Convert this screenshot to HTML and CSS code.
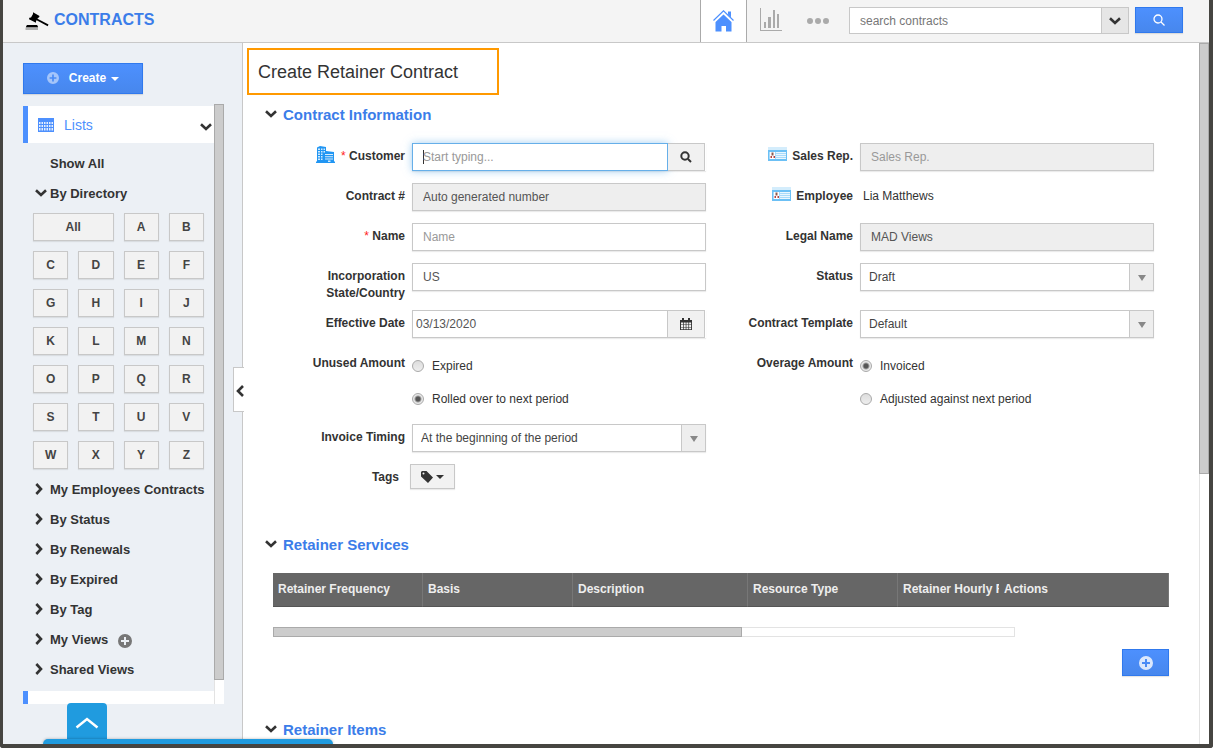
FILE: index.html
```html
<!DOCTYPE html>
<html lang="en">
<head>
<meta charset="utf-8">
<title>Contracts - Create Retainer Contract</title>
<link rel="stylesheet" href="styles.css">
</head>
<body>
<svg class="defs" aria-hidden="true">
  <symbol id="chev-down" viewBox="0 0 12 8"><path d="M1 1.300 6 6l5-4.700" fill="none" stroke="currentColor" stroke-width="2.600"/></symbol>
  <symbol id="chev-right" viewBox="0 0 8 12"><path d="M1.300 1 6 6l-4.700 5" fill="none" stroke="currentColor" stroke-width="2.600"/></symbol>
  <symbol id="plus-circle" viewBox="0 0 14 14"><path fill="currentColor" fill-rule="evenodd" d="M7 0a7 7 0 1 0 0 14A7 7 0 0 0 7 0zM6 3h2v3h3v2H8v3H6V8H3V6h3z"/></symbol>
  <symbol id="caret" viewBox="0 0 8 4"><path d="M0 0h8L4 4z" fill="currentColor"/></symbol>
  <symbol id="id-card" viewBox="0 0 19 14">
    <path fill="#d4edfc" d="M0 0h19v3H0z"/><path fill="#6cc0f5" d="M0 3h19v11H0z"/>
    <path fill="#a9dbfa" d="M1 5h17v7H1z"/><path fill="#fff" d="M2 5h5v7H2z"/>
    <path fill="#8a5a50" d="M3.500 5.500h2v3h-2z"/><path fill="#b5433f" d="M2.500 9h1.500v2H2.500zM5.500 9H7v2H5.500z"/>
    <path fill="#eaf7ff" d="M8 5h10v1H8zM8 7h10v1H8zM8 9h10v1H8zM8 11h10v1H8z"/>
  </symbol>
</svg>
<div class="window">
  <header class="topbar">
    <svg class="gavel" viewBox="0 0 24 19" aria-hidden="true">
      <path d="M8 .3 14.500 4l-.5 1.500-1 .3-2 3.500v1.500L4 7.300l.3-1.500L6 5.500l2-3.500z"/>
      <path d="m12 6.500 11.500 6-.8 1.700L11.200 8z"/><path d="M2 13h10l1 1.500v1H1v-1z"/><path fill="#b0b0b0" d="M.5 15.500h12.500V18H.5z"/>
    </svg>
    <span class="brand">CONTRACTS</span>
    <nav class="tabs">
      <a class="tab tab-active" href="#" aria-label="Home">
        <svg width="21" height="22" viewBox="0 0 21 22"><path fill="#4d90fe" d="M10.500 4.500 18.500 12v9.500h-5.500V16H8.500v5.500H2.500V12zM15 1.500h3v6l-3-3z"/><path d="m.5 10.500 10-9.700 10 9.700" fill="none" stroke="#4d90fe" stroke-width="1.200"/><path d="m2 11.300 8.500-8.200 8.500 8.200" fill="none" stroke="#fff" stroke-width="1"/></svg>
      </a>
      <a class="tab tab-chart" href="#" aria-label="Reports">
        <svg width="22" height="23" viewBox="0 0 22 23" fill="#aaa"><path d="M0 0h1v22h21v1H0zM4 14h2v6H4zM8 9h3v11H8zM13 2h2v18h-2zM17 6h2v14h-2z"/></svg>
      </a>
      <a class="tab" href="#" aria-label="More">
        <svg width="22" height="6" viewBox="0 0 22 6" fill="#aaa"><circle cx="3" cy="3" r="3"/><circle cx="11" cy="3" r="3"/><circle cx="19" cy="3" r="3"/></svg>
      </a>
    </nav>
    <form class="search">
      <div class="search-box">
        <input type="text" placeholder="search contracts" aria-label="Search contracts">
        <button type="button" aria-label="Search options"><svg width="12" height="8"><use href="#chev-down"/></svg></button>
      </div>
      <button class="primary search-go" type="button" aria-label="Search">
        <svg width="12" height="12" viewBox="0 0 12 12" fill="none" stroke="#fff" stroke-width="1.300"><circle cx="5" cy="5" r="4"/><path d="m8 8 3.500 3.500"/></svg>
      </button>
    </form>
  </header>

  <div class="body">
    <aside class="sidebar">
      <button class="primary create" type="button">
        <svg class="create-plus" width="12" height="12"><use href="#plus-circle"/></svg>
        Create
        <svg width="8" height="4"><use href="#caret"/></svg>
      </button>
      <div class="lists">
        <div class="lists-main">
          <a class="lists-head" href="#">
            <svg width="16" height="14" viewBox="0 0 16 14"><path fill="#4d90fe" d="M0 0h16v14H0z"/><path fill="#e6effd" d="M1 4h1.500v2H1zM3.500 4H5v2H3.500zM6 4h1.500v2H6zM8.500 4H10v2H8.500zM11 4h1.500v2H11zM13.500 4H15v2h-1.500zM1 7h1.500v2H1zM3.500 7H5v2H3.500zM6 7h1.500v2H6zM8.500 7H10v2H8.500zM11 7h1.500v2H11zM13.500 7H15v2h-1.500zM1 10h1.500v2.500H1zM3.500 10H5v2.500H3.500zM6 10h1.500v2.500H6zM8.500 10H10v2.500H8.500zM11 10h1.500v2.500H11zM13.500 10H15v2.500h-1.500z"/></svg>
            <span>Lists</span>
            <svg class="chev" width="12" height="8"><use href="#chev-down"/></svg>
          </a>
          <ul class="views">
            <li><a href="#"><span class="mark"></span>Show All</a></li>
            <li><a href="#"><span class="mark"><svg width="12" height="8"><use href="#chev-down"/></svg></span>By Directory</a>
              <div class="letters">
                <button class="all" type="button">All</button><button type="button">A</button><button type="button">B</button>
                <button type="button">C</button><button type="button">D</button><button type="button">E</button><button type="button">F</button>
                <button type="button">G</button><button type="button">H</button><button type="button">I</button><button type="button">J</button>
                <button type="button">K</button><button type="button">L</button><button type="button">M</button><button type="button">N</button>
                <button type="button">O</button><button type="button">P</button><button type="button">Q</button><button type="button">R</button>
                <button type="button">S</button><button type="button">T</button><button type="button">U</button><button type="button">V</button>
                <button type="button">W</button><button type="button">X</button><button type="button">Y</button><button type="button">Z</button>
              </div>
            </li>
            <li><a href="#"><span class="mark"><svg width="8" height="12"><use href="#chev-right"/></svg></span>My Employees Contracts</a></li>
            <li><a href="#"><span class="mark"><svg width="8" height="12"><use href="#chev-right"/></svg></span>By Status</a></li>
            <li><a href="#"><span class="mark"><svg width="8" height="12"><use href="#chev-right"/></svg></span>By Renewals</a></li>
            <li><a href="#"><span class="mark"><svg width="8" height="12"><use href="#chev-right"/></svg></span>By Expired</a></li>
            <li><a href="#"><span class="mark"><svg width="8" height="12"><use href="#chev-right"/></svg></span>By Tag</a></li>
            <li><a href="#"><span class="mark"><svg width="8" height="12"><use href="#chev-right"/></svg></span>My Views<svg class="add-view" width="14" height="14"><use href="#plus-circle"/></svg></a></li>
            <li><a href="#"><span class="mark"><svg width="8" height="12"><use href="#chev-right"/></svg></span>Shared Views</a></li>
          </ul>
          <div class="next-panel"></div>
        </div>
        <div class="track"><div class="thumb thumb-side"></div></div>
      </div>
      <button class="collapse" type="button" aria-label="Collapse sidebar"><svg width="8" height="12" viewBox="0 0 8 12"><path d="M7 1 2 6l5 5" fill="none" stroke="#333" stroke-width="2.600"/></svg></button>
    </aside>

    <main class="content">
      <h1 class="title">Create Retainer Contract</h1>

      <h2 class="section"><svg width="12" height="8"><use href="#chev-down"/></svg>Contract Information</h2>
      <form class="form">
        <div class="row">
          <label for="customer"><svg class="label-icon building" width="19" height="17" viewBox="0 0 19 17"><path fill="#2196f3" d="M1 1.500 4 0l6 1v4l8 1v9.500h1V17H0v-1.500h1z"/><path fill="#d5ecfd" d="M2 2.500h2V4H2zM5 2.500h1.500V4H5zM7.500 2.500H9V4H7.500zM2 5h2v1.500H2zM5 5h1.500v1.500H5zM7.500 5H9v1.500H7.500zM2 7.500h2V9H2zM5 7.500h1.500V9H5zM2 10h2v1.500H2zM5 10h1.500v1.500H5zM2 12.500h2V14H2zM5 12.500h1.500V14H5zM9 8h8v1H9zM9 10.300h8v1H9zM9 12.500h8v1H9zM12 14.500h2.500V16H12z"/></svg><span class="req">*</span> Customer</label>
          <div class="combo"><input class="active" id="customer" type="text" placeholder="Start typing..." autofocus><button type="button" aria-label="Find customer"><svg width="12" height="12" viewBox="0 0 12 12" fill="none" stroke="#333" stroke-width="2"><circle cx="5" cy="5" r="3.700"/><path d="m8 8 3 3"/></svg></button></div>
        </div>
        <div class="row">
          <label for="rep"><svg class="label-icon" width="19" height="14"><use href="#id-card"/></svg>Sales Rep.</label>
          <input id="rep" type="text" placeholder="Sales Rep." disabled>
        </div>
        <div class="row">
          <label for="number">Contract #</label>
          <input id="number" type="text" value="Auto generated number" disabled>
        </div>
        <div class="row">
          <span class="label"><svg class="label-icon" width="19" height="14"><use href="#id-card"/></svg>Employee</span>
          <span class="static">Lia Matthews</span>
        </div>
        <div class="row">
          <label for="name"><span class="req">*</span> Name</label>
          <input id="name" type="text" placeholder="Name">
        </div>
        <div class="row">
          <label for="legal">Legal Name</label>
          <input id="legal" type="text" value="MAD Views" disabled>
        </div>
        <div class="row">
          <label for="state">Incorporation State/Country</label>
          <input id="state" type="text" value="US">
        </div>
        <div class="row">
          <label for="status">Status</label>
          <div class="pick"><select id="status"><option>Draft</option></select><span class="arrow"></span></div>
        </div>
        <div class="row">
          <label for="date">Effective Date</label>
          <div class="combo"><input class="date" id="date" type="text" value="03/13/2020"><button type="button" aria-label="Open calendar"><svg width="12" height="12" viewBox="0 0 12 12"><path fill="#333" d="M0 2h12v10H0zM2 0h2v3H2zM8 0h2v3H8z"/><path fill="#f1f1f1" d="M1 4.500h2v2H1zM3.700 4.500h2v2h-2zM6.400 4.500h2v2h-2zM9.100 4.500h2v2h-2zM1 7h2v2H1zM3.700 7h2v2h-2zM6.400 7h2v2h-2zM9.100 7h2v2h-2zM1 9.500h2v1.700H1zM3.700 9.500h2v1.700h-2zM6.400 9.500h2v1.700h-2zM9.100 9.500h2v1.700h-2z"/></svg></button></div>
        </div>
        <div class="row">
          <label for="template">Contract Template</label>
          <div class="pick"><select id="template"><option>Default</option></select><span class="arrow"></span></div>
        </div>
        <div class="row" role="radiogroup" aria-labelledby="unused">
          <span class="label" id="unused">Unused Amount</span>
          <div class="options">
            <label><input type="radio" name="unused">Expired</label>
            <label><input type="radio" name="unused" checked>Rolled over to next period</label>
          </div>
        </div>
        <div class="row" role="radiogroup" aria-labelledby="overage">
          <span class="label" id="overage">Overage Amount</span>
          <div class="options">
            <label><input type="radio" name="overage" checked>Invoiced</label>
            <label><input type="radio" name="overage">Adjusted against next period</label>
          </div>
        </div>
        <div class="row row-start">
          <label for="timing">Invoice Timing</label>
          <div class="pick"><select id="timing"><option>At the beginning of the period</option></select><span class="arrow"></span></div>
        </div>
        <div class="row row-start row-tags">
          <label for="tags">Tags</label>
          <button class="tags" id="tags" type="button"><svg width="12" height="12" viewBox="0 0 12 12"><path fill="#333" fill-rule="evenodd" d="M0 1 1 0h4.500L12 6.500 7 12 0 5.500zM2.500 1.500a1 1 0 1 0 0 2 1 1 0 0 0 0-2z"/></svg><svg width="8" height="4"><use href="#caret"/></svg></button>
        </div>
      </form>

      <h2 class="section section-services"><svg width="12" height="8"><use href="#chev-down"/></svg>Retainer Services</h2>
      <div class="services">
        <table class="grid">
          <thead><tr><th class="c150">Retainer Frequency</th><th class="c150">Basis</th><th class="c175">Description</th><th class="c150">Resource Type</th><th class="hourly">Retainer Hourly Rate</th><th class="actions">Actions</th></tr></thead>
        </table>
        <div class="hscroll"><div class="hthumb"></div></div>
        <button class="primary add-row" type="button" aria-label="Add service"><svg width="14" height="14"><use href="#plus-circle"/></svg></button>
      </div>

      <h2 class="section section-items"><svg width="12" height="8"><use href="#chev-down"/></svg>Retainer Items</h2>
    </main>
    <div class="track"><div class="thumb thumb-page"></div></div>
  </div>
  <div class="dock">
    <button class="dock-tab" type="button" aria-label="Open dock"><svg width="24" height="12" viewBox="0 0 24 12"><path d="M1.500 10.500 12 2l10.500 8.500" fill="none" stroke="#fff" stroke-width="2.500"/></svg></button>
    <div class="dock-bar"></div>
  </div>
</div>
</body>
</html>
```
FILE: styles.css
```css
* { box-sizing: border-box; }
body {
  margin: 0;
  font: 12px/17px "Liberation Sans", Arial, sans-serif;
  color: #333;
  background: #fff;
}
button, input, select { font: inherit; color: inherit; margin: 0; }
button { padding: 0; cursor: pointer; }
a { color: inherit; text-decoration: none; }
svg { display: block; flex: none; }
.defs { display: none; }

.window {
  position: relative;
  display: flex;
  flex-direction: column;
  height: 100vh;
  overflow: hidden;
  border: solid #464541;
  border-width: 0 4px 4px 3px;
  border-radius: 0 0 3px 3px;
}

/* Top bar */
.topbar {
  display: flex;
  align-items: stretch;
  flex: none;
  height: 43px;
  padding: 0 26px 0 22px;
  background: #f4f4f4;
  border-bottom: 1px solid #c8c8c8;
}
.gavel { width: 24px; height: 19px; margin-top: 12px; }
.brand {
  margin-left: 5px;
  font-size: 16px;
  font-weight: bold;
  line-height: 40px;
  color: #3b7de9;
}
.tabs { display: flex; margin-left: auto; }
.tab {
  display: flex;
  align-items: center;
  justify-content: center;
  width: 47px;
}
.tab-active {
  background: #fff;
  border: solid #aaa;
  border-width: 0 1px;
}
.tab-chart { padding-bottom: 3px; }
.search { display: flex; align-items: flex-start; gap: 6px; margin-left: 8px; padding-top: 7px; }
.search-box {
  display: flex;
  width: 280px;
  height: 27px;
  border: 1px solid #c8c8c8;
  background: #fff;
}
.search-box input {
  flex: 1;
  min-width: 0;
  padding: 2px 10px 0;
  border: 0;
  background: none;
}
.search-box input::placeholder { color: #777; }
.search-box button {
  display: flex;
  align-items: center;
  justify-content: center;
  width: 27px;
  border: 0;
  border-left: 1px solid #c8c8c8;
  background: #e6e6e6;
}
.primary {
  display: flex;
  align-items: center;
  justify-content: center;
  border: 1px solid #3079ed;
  background: linear-gradient(#4d90fe, #4787ed);
  box-shadow: 0 1px 1px rgba(0, 0, 0, .1);
  color: #fff;
}
.search-go { width: 48px; height: 26px; }

/* Body */
.body { display: flex; flex: 1; min-height: 0; }
.sidebar {
  position: relative;
  display: flex;
  flex-direction: column;
  flex: none;
  width: 240px;
  padding: 20px 18px 40px 20px;
  background: #ecf0f5;
  border-right: 1px solid #c8c8c8;
}
.create { flex: none; width: 120px; height: 31px; gap: 5px; font-weight: bold; }
.create-plus { margin: 0 5px 2px 0; opacity: .5; }
.lists { display: flex; flex: 1; min-height: 0; margin-top: 10px; }
.lists-main { flex: 1; min-width: 0; padding-top: 2px; overflow: hidden; }
.lists-head {
  display: flex;
  align-items: center;
  height: 37px;
  padding: 0 2px 0 10px;
  border-left: 5px solid #4d90fe;
  background: #fff;
  font-size: 14px;
  line-height: 18px;
  color: #4d90fe;
}
.lists-head span { margin-left: 10px; }
.lists-head .chev { margin: 4px 0 0 auto; color: #333; }
.views {
  margin: 0;
  padding: 5px 0 7px;
  list-style: none;
  font-size: 13px;
  font-weight: bold;
}
.views a { display: flex; align-items: center; height: 30px; white-space: nowrap; }
.mark { display: flex; width: 15px; margin-left: 12px; }
.add-view { margin: 4px 0 0 10px; color: #777; }
.letters {
  display: grid;
  grid-template-columns: repeat(4, 1fr);
  gap: 10px;
  padding: 5px 10px;
}
.letters button {
  height: 28px;
  border: 1px solid #c8c8c8;
  background: #f2f2f2;
  box-shadow: 0 1px 1px rgba(0, 0, 0, .08);
  font-size: 12px;
  font-weight: bold;
  color: #444;
}
.letters .all { grid-column: span 2; }
.next-panel { height: 37px; border-left: 5px solid #4d90fe; background: #fff; }
.track { flex: none; width: 10px; background: #fff; border-left: 1px solid #e3e3e3; }
.thumb { width: 10px; margin-left: -1px; background: #ccc; border: 1px solid #aaa; }
.thumb-side { height: 96%; }
.thumb-page { height: 61.5%; }
.collapse {
  position: absolute;
  top: 324px;
  right: -2px;
  display: flex;
  align-items: center;
  justify-content: flex-end;
  width: 11px;
  height: 45px;
  padding-top: 2px;
  border: 1px solid #c8c8c8;
  border-right: 0;
  background: #fff;
}

/* Content */
.content { flex: 1; min-width: 0; padding: 5px 0 0; overflow: hidden; }
.title {
  width: fit-content;
  margin: 0 0 0 4px;
  padding: 1px 39px 0 9px;
  border: 2px solid #f90;
  font-size: 18px;
  font-weight: normal;
  line-height: 42px;
}
.section {
  display: flex;
  align-items: center;
  gap: 6px;
  margin: 10px 0 0 22px;
  font-size: 15px;
  line-height: 20px;
  color: #3b7de9;
}
.section svg { margin-bottom: 2px; color: #333; }
.form {
  display: grid;
  grid-template-columns: 1fr 1fr;
  row-gap: 8px;
  padding: 18px 45px 0 15px;
}
.row { display: grid; grid-template-columns: 147px 1fr; column-gap: 7px; align-items: start; }
.row-start { grid-column: 1; }
.row-tags { grid-template-columns: 141px 1fr; column-gap: 11px; }
.row > label, .label {
  padding: 5px 0 0 40px;
  text-align: right;
  font-weight: bold;
}
.label-icon { display: inline-block; margin: -5px 5px -5px 0; vertical-align: 4px; }
.building { vertical-align: 2px; margin-right: 6px; }
.req { font-weight: normal; color: #f22; }
.row > input, .combo, .pick { width: 100%; height: 28px; margin-bottom: 4px; box-shadow: 0 1px 1px rgba(0, 0, 0, .08); }
.row > input, .combo input {
  padding: 0 10px;
  border: 1px solid #c8c8c8;
  border-radius: 0;
  background: #fff;
  color: #555;
  outline: 0;
}
.row > input::placeholder, .combo input::placeholder { color: #999; }
.row > input:disabled { background: #eee; }
.combo { display: flex; }
.combo input { flex: 1; min-width: 0; }
.combo .date { padding: 0 3px; }
.combo .active {
  border-color: #66afe9;
  box-shadow: 0 0 8px rgba(102, 175, 233, .6);
  background: linear-gradient(#333, #333) 10px center / 1px 14px no-repeat #fff;
  caret-color: transparent;
}
.combo button {
  display: flex;
  align-items: center;
  justify-content: center;
  width: 37px;
  margin-right: 1px;
  border: 1px solid #c8c8c8;
  border-left: 0;
  background: #f1f1f1;
}
.static { padding: 5px 3px 0; }
.pick { display: flex; border: 1px solid #c8c8c8; background: #fff; }
.pick select {
  flex: 1;
  min-width: 0;
  padding: 0 0 0 8px;
  border: 0;
  appearance: none;
  background: none;
  color: #444;
}
.arrow {
  display: flex;
  align-items: center;
  justify-content: center;
  width: 24px;
  padding-top: 1px;
  border-left: 1px solid #c8c8c8;
  background: #eee;
}
.arrow::after {
  content: "";
  border: solid transparent;
  border-width: 6px 4px 0;
  border-top-color: #888;
}
.options { display: flex; flex-direction: column; gap: 16px; padding: 8px 0; }
.options label { display: flex; align-items: center; }
.options input {
  appearance: none;
  width: 12px;
  height: 12px;
  margin: 0 8px 1px 0;
  border: 1px solid #aaa;
  border-radius: 50%;
  background: linear-gradient(#ddd, #eee);
}
.options input:checked { background: radial-gradient(circle, #555 0 2px, #e8e8e8 4px); }
.tags {
  display: flex;
  align-items: center;
  justify-content: center;
  gap: 3px;
  width: 45px;
  height: 25px;
  border: 1px solid #c8c8c8;
  background: #f2f2f2;
  box-shadow: 0 1px 1px rgba(0, 0, 0, .08);
}

/* Retainer services */
.section-services { margin-top: 46px; }
.services { padding: 18px 30px 0; }
.grid { width: 100%; border-collapse: separate; border-spacing: 0; table-layout: fixed; }
.grid th {
  height: 34px;
  padding: 0 5px;
  overflow: hidden;
  white-space: nowrap;
  text-align: left;
  background: #666;
  border-right: 1px solid #777;
  border-bottom: 1px solid #555;
  color: #eee;
}
.grid .hourly { border-right: 0; }
.c150 { width: 150px; }
.c175 { width: 175px; }
.actions { width: 170px; }
.hscroll { height: 10px; margin: 20px 154px 0 0; border: 1px solid #e3e3e3; }
.hthumb { width: 469px; height: 10px; margin: -1px; background: #ccc; border: 1px solid #aaa; }
.add-row { width: 47px; height: 27px; margin: 12px 0 0 auto; }
.add-row svg { opacity: .8; }
.section-items { margin-top: 44px; }

/* Dock at the window's bottom edge */
.dock { position: absolute; left: 40px; bottom: 0; width: 290px; }
.dock-tab {
  display: flex;
  align-items: center;
  justify-content: center;
  width: 40px;
  height: 36px;
  margin-left: 24px;
  padding-top: 4px;
  border: 0;
  border-radius: 4px 4px 0 0;
  background: #209bdf;
}
.dock-bar { height: 5px; border-radius: 5px 5px 0 0; background: #209bdf; box-shadow: 0 0 3px rgba(0, 0, 0, .3); }
```
